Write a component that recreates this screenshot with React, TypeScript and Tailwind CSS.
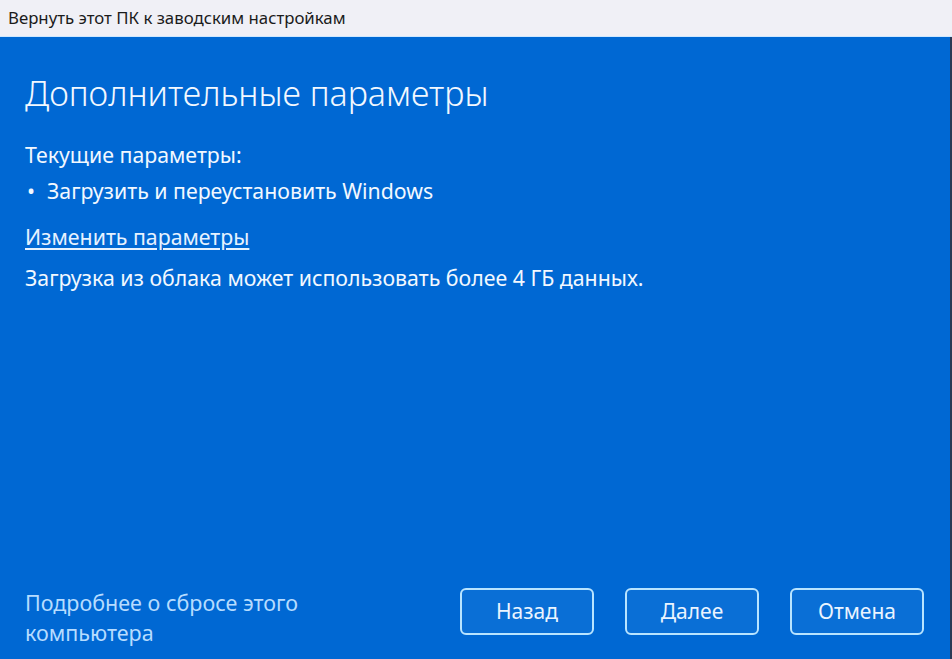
import React from 'react';

const FONT = { fontFamily: '"Noto Sans", "Open Sans", "Liberation Sans", sans-serif' };

const DialogButton: React.FC<{ label: string }> = ({ label }) => (
  <button className="w-[134px] h-[47px] rounded-[6px] border-2 border-[#b8e4ff] bg-[#0a6fd6] text-[21px] text-[#eaf4ff]">
    {label}
  </button>
);

export default function App() {
  return (
    <div className="w-[952px] h-[659px] flex flex-col overflow-hidden" style={FONT}>
      <div className="h-[37px] flex items-center pl-[8px] bg-[#f0f0f6] border-b border-[#cfe8ff]">
        <span className="text-[16.8px] text-[#1b1b1b]">Вернуть этот ПК к заводским настройкам</span>
      </div>
      <div className="flex-1 flex bg-[#0068d3]">
        <div className="flex-1 flex flex-col px-[25px] text-[#f2f8ff]">
          <h1 className="mt-[34px] text-[34px] font-light leading-[44px]">Дополнительные параметры</h1>
          <p className="mt-[27px] text-[21.3px] leading-[26px]">Текущие параметры:</p>
          <div className="mt-[10px] flex items-center text-[21.3px] leading-[26px]">
            <span className="w-[22px] pl-[2px]">•</span>
            <span>Загрузить и переустановить Windows</span>
          </div>
          <a className="mt-[20px] self-start text-[21.3px] leading-[26px] underline underline-offset-[3px] text-[#e6f2ff]">
            Изменить параметры
          </a>
          <p className="mt-[15px] text-[21.3px] leading-[26px]">Загрузка из облака может использовать более 4 ГБ данных.</p>
          <div className="mt-auto mb-[11px] flex items-start justify-between">
            <div className="text-[21.5px] leading-[30px] text-[#b6dcff]">
              <div>Подробнее о сбросе этого</div>
              <div>компьютера</div>
            </div>
            <div className="flex gap-[31px] mr-[1px]">
              <DialogButton label="Назад" />
              <DialogButton label="Далее" />
              <DialogButton label="Отмена" />
            </div>
          </div>
        </div>
        <div className="w-[2px] bg-[#2a3a55]" />
      </div>
    </div>
  );
}
